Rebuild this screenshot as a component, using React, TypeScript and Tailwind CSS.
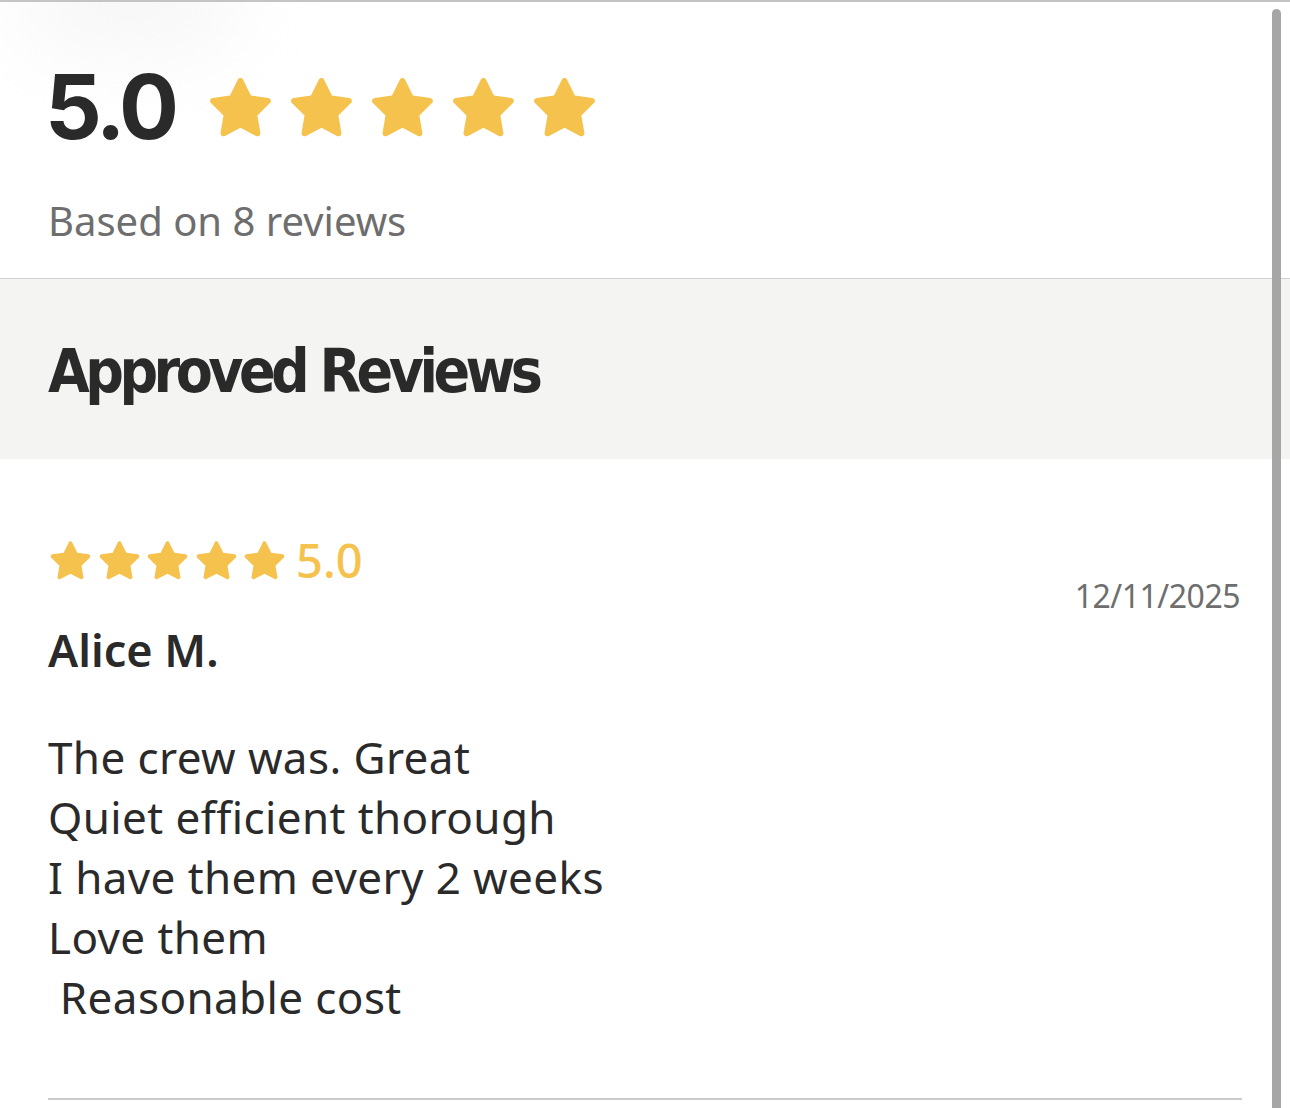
import React from "react";

const STAR = "M12 2.6c.35 0 .66.2.8.52l2.37 4.8 5.3.77c.35.05.64.3.75.63.1.33.02.7-.24.94l-3.83 3.74.9 5.28c.06.35-.08.7-.37.9-.28.2-.66.23-.97.07L12 17.75l-4.74 2.5c-.31.16-.69.13-.97-.07-.29-.2-.43-.55-.37-.9l.9-5.28-3.830-3.74c-.26-.24-.34-.61-.24-.94.11-.33.4-.58.75-.63l5.3-.77 2.37-4.8c.14-.32.45-.52.8-.52z";

function Star({ size }: { size: number }) {
  return (
    <svg width={size} height={size} viewBox="2.4 2.6 19.2 18" aria-hidden="true">
      <path d={STAR} fill="#f5c34d" />
    </svg>
  );
}

const body = "'Noto Sans', 'Open Sans', sans-serif";

export default function App() {
  return (
    <div className="relative w-[1290px] h-[1108px] overflow-hidden bg-white text-[#2a2a2a]" style={{ fontFamily: body }}>
      <div className="absolute left-[20px] top-[-40px] w-[220px] h-[90px] rounded-full bg-[#f2f2f2] blur-2xl opacity-70" />
      <div className="relative border-t-2 border-[#c4c4c4]">
        <div className="h-[276px] px-[48px] pt-[60px]">
          <div className="flex items-center gap-[34px]">
            <span className="ml-[-3px] text-[89px] leading-none font-bold tracking-[-4px]" style={{ fontFamily: "Inter, sans-serif" }}>5.0</span>
            <div className="flex gap-[18px] mt-[2px]">
              {[0, 1, 2, 3, 4].map((i) => (
                <Star key={i} size={63} />
              ))}
            </div>
          </div>
          <div className="mt-[50px] text-[40px] leading-none text-[#6e6e6e]">Based on 8 reviews</div>
        </div>
        <div className="border-t border-[#cfcfcf] bg-[#f4f4f2] h-[181px] px-[48px] flex items-center">
          <h2 className="text-[60px] leading-none font-bold tracking-[-4.5px] mt-[4px]" style={{ fontFamily: "'DejaVu Sans Condensed', 'DejaVu Sans', sans-serif" }}>Approved Reviews</h2>
        </div>
        <div className="px-[48px] pr-[50px]">
          <div className="pt-[78px] flex justify-between">
            <div>
              <div className="flex items-center gap-[11px]">
                <div className="flex gap-[7.5px] ml-[2px]">
                  {[0, 1, 2, 3, 4].map((i) => (
                    <Star key={i} size={41} />
                  ))}
                </div>
                <span className="text-[47px] leading-none font-medium text-[#f5c34d]">5.0</span>
              </div>
              <div className="mt-[43px] text-[45px] leading-none font-semibold">Alice M.</div>
            </div>
            <div className="pt-[43px] text-[32px] leading-none tracking-[-0.5px] text-[#6e6e6e]">12/11/2025</div>
          </div>
          <div className="mt-[55px] text-[44px] leading-[60px] tracking-[0.4px] whitespace-pre-line">
            {"The crew was. Great\nQuiet efficient thorough\nI have them every 2 weeks\nLove them\n"}
            <span className="whitespace-pre">{" Reasonable cost"}</span>
          </div>
          <div className="mt-[71px] mr-[-2px] border-t-2 border-[#cbcbcb]" />
        </div>
      </div>
      <div className="absolute right-[9px] top-[9px] bottom-0 w-[9px] rounded-t-full bg-[#a6a6a6]" />
    </div>
  );
}
